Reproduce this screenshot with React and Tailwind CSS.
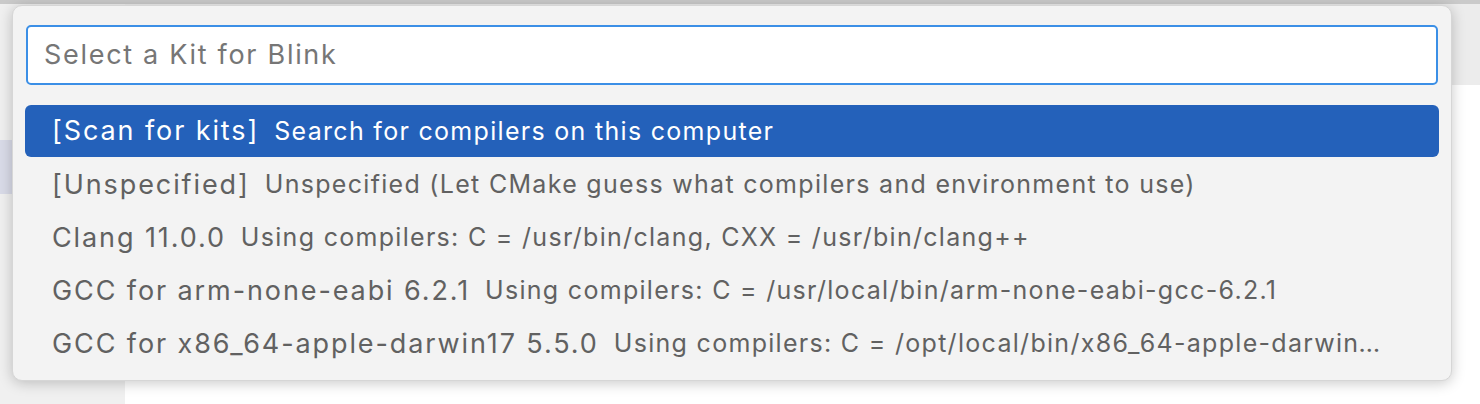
const kits = [
  { label: '[Scan for kits]', detail: 'Search for compilers on this computer', active: true },
  { label: '[Unspecified]', detail: 'Unspecified (Let CMake guess what compilers and environment to use)' },
  { label: 'Clang 11.0.0', detail: 'Using compilers: C = /usr/bin/clang, CXX = /usr/bin/clang++' },
  { label: 'GCC for arm-none-eabi 6.2.1', detail: 'Using compilers: C = /usr/local/bin/arm-none-eabi-gcc-6.2.1' },
  { label: 'GCC for x86_64-apple-darwin17 5.5.0', detail: 'Using compilers: C = /opt/local/bin/x86_64-apple-darwin17-gcc-mp-5' },
]

const KitRow = ({ kit }) => (
  <div
    className={`flex items-center pt-px pl-[27px] pr-[52px] rounded-[6px] whitespace-nowrap overflow-hidden ${
      kit.active ? 'bg-[#2461ba] text-white h-[52px] mb-px' : 'h-[53px] text-[#616161]'
    }`}
  >
    <span className="text-[27px] tracking-[1.9px] shrink-0">{kit.label}</span>
    <span className="text-[25px] tracking-[1.3px] ml-[15px] truncate">{kit.detail}</span>
  </div>
)

export default function App() {
  return (
    <div
      className="relative w-[1480px] h-[404px] bg-white overflow-hidden"
      style={{ fontFamily: 'Inter, "Noto Sans", sans-serif' }}
    >
      {/* window behind the picker */}
      <div className="h-[4px] bg-[#cacaca]" />
      <div className="flex h-[400px]">
        <div className="w-[125px] bg-[#f0f0f0] pt-[136px]">
          <div className="h-[54px] bg-[#d9dbe8]" />
        </div>
        <div className="flex-1 flex flex-col">
          <div className="h-[81px] bg-[#ececec]" />
          <div className="flex-1 bg-white" />
        </div>
      </div>

      {/* quick pick */}
      <div className="absolute left-[12px] top-[5px] w-[1440px] h-[376px] bg-[#f3f3f3] rounded-[10px] border border-[#d6d6d6] shadow-[0_2px_14px_rgba(0,0,0,0.22)] px-[12px] pt-[19px]">
        <div className="mx-[1px] h-[60px] bg-white border-2 border-[#3b8fe6] rounded-[5px] flex items-center pt-px px-[16px]">
          <span className="text-[27px] tracking-[1.7px] text-[#767676]">Select a Kit for Blink</span>
        </div>
        <div className="mt-[20px]">
          {kits.map((kit) => (
            <KitRow key={kit.label} kit={kit} />
          ))}
        </div>
      </div>
    </div>
  )
}
